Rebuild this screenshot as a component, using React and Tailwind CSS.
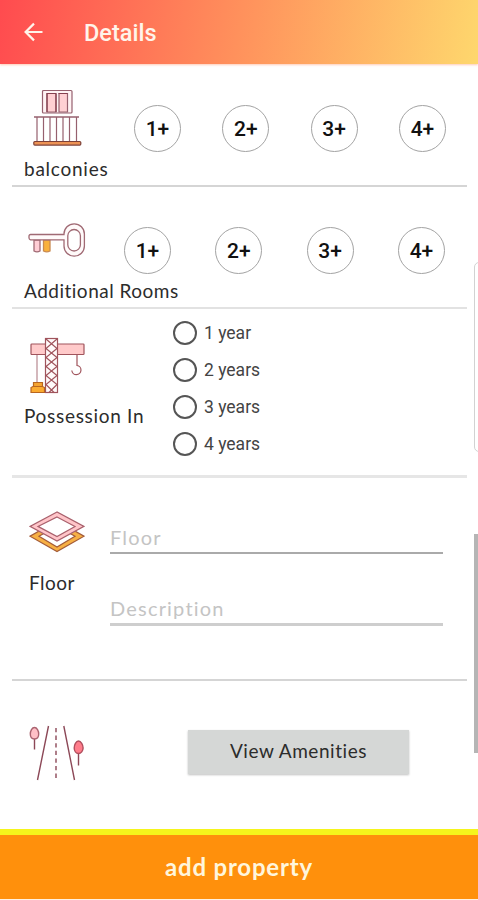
import React, { useState } from 'react';

const COUNTS = ['1+', '2+', '3+', '4+'];
const YEARS = ['1 year', '2 years', '3 years', '4 years'];

function ArrowLeftIcon() {
  return (
    <svg className="ml-[24px] h-[20px] w-[20px]" viewBox="0 0 20 20" fill="none" stroke="#fff4ea" strokeWidth="2.2">
      <path d="M18.5 10H1.8M10 1.600L1.600 10l8.400 8.400" />
    </svg>
  );
}

function BalconyIcon() {
  return (
    <svg className="h-[58px] w-[50px]" viewBox="0 0 50 58" fill="none" stroke="#96606e" strokeWidth="1.2">
      <rect x="9.500" y="1.500" width="29.5" height="22.5" rx="1" fill="#fff3f4" />
      <path d="M14 4.5h9v18.5h-9zM26 4.5h8.5v18.5H26z" fill="#ffd0d3" />
      <path d="M23 4.5v18.5M14 4.5v18.5M13.500 4.5H23M25.500 4.5h9" stroke="#86404f" />
      <path d="M1 28h45" strokeWidth="1.6" />
      <path d="M4 28v24M10.500 28v24M17 28v24M23.500 28v24M30 28v24M36.500 28v24M43.500 28v24" />
      <rect x="0.8" y="52.500" width="47" height="3.6" rx="1" fill="#ed9355" stroke="#7d4138" />
    </svg>
  );
}

function KeyIcon() {
  return (
    <svg className="h-[36px] w-[58px]" viewBox="0 0 58 36" fill="none" stroke="#a06a74" strokeWidth="1.3">
      <path d="M6 17v11q3 1.6 6 0V17z" fill="#ffcdd5" />
      <path d="M15.5 17v11q3.3 1.6 6.5 0V17z" fill="#f9b13c" stroke="#c98a50" />
      <path d="M36 11.5H2.5a1.5 1.5 0 0 0-1.5 1.5v2a2 2 0 0 0 1.5 1.8H36v6.2a10.2 10.2 0 0 0 20.4 0V11a10.2 10.2 0 0 0-20.4 0z" fill="#fffafa" />
      <rect x="39.8" y="6.5" width="12.6" height="21.5" rx="6.3" fill="#fff" />
    </svg>
  );
}

function CraneIcon() {
  return (
    <svg className="h-[58px] w-[56px]" viewBox="0 0 56 58" fill="none" stroke="#a0545c" strokeWidth="1.2">
      <rect x="1" y="7" width="53" height="10.5" rx="0.8" fill="#ffcaca" />
      <path d="M7 18v27" stroke="#b88990" />
      <rect x="15.5" y="1.5" width="12" height="54" fill="#fffafa" />
      <path d="M16 2l11 9.5-11 9 11 9-11 9 11 9-8 8M27 2l-11 9.5 11 9-11 9 11 9-11 9 8 8" />
      <path d="M47 18v10.5a4.6 4.6 0 1 1-5.2 5" />
      <path d="M3.5 50v-4.5h9V50z" fill="#f5a32f" stroke="#b8651f" />
      <path d="M1 55.5v-5l2-1h9.5l2 1v5z" fill="#fbab30" stroke="#b8651f" />
    </svg>
  );
}

function FloorIcon() {
  return (
    <svg className="h-[42px] w-[56px]" viewBox="0 0 56 42" strokeWidth="1.2" fillRule="evenodd">
      <path d="M28 10L1 25.2l27 15.3 27-15.3zM28 15l18 10.2L28 36 10 25.2z" fill="#f7b044" stroke="#a35b38" />
      <path d="M28 1L1 15.4 28 30l27-14.6z" fill="#fff" stroke="none" />
      <path d="M28 1L1 15.4 28 30l27-14.6zM28 6l18 9.4L28 25.5 9 15.4z" fill="#ffc5c9" stroke="#a9606c" />
    </svg>
  );
}

function RoadIcon() {
  return (
    <svg className="h-[56px] w-[56px]" viewBox="0 0 56 56" fill="none" stroke="#8c4857" strokeWidth="1.4">
      <path d="M19.500 1L8.500 55M34.800 1L45.500 55" />
      <path d="M27 3v52" strokeDasharray="4.3 3.3" />
      <path d="M5.500 12v12.5M49.500 27v13.5" />
      <path d="M5.500 2.500C3 2.500 1.300 6 1.300 9s1.800 5 4.200 5 4.200-2 4.200-5S8 2.500 5.500 2.500z" fill="#ffc0c7" stroke="#ab6370" />
      <path d="M49.500 16c-2.500 0-4.300 4-4.300 7s1.800 5.500 4.300 5.500 4.600-2.500 4.600-5.500S52 16 49.500 16z" fill="#ff7d8b" stroke="#b14e5d" />
    </svg>
  );
}

function CountPicker({ className, value, onChange }) {
  return (
    <div className={`flex justify-between ${className}`}>
      {COUNTS.map(c => (
        <button
          key={c}
          onClick={() => onChange(c)}
          aria-pressed={value === c}
          className="flex h-[47px] w-[47px] items-center justify-center rounded-full border border-[#a3a3a3] pt-[2px] font-[Roboto,sans-serif] text-[21px] font-medium text-[#111]"
        >
          {c}
        </button>
      ))}
    </div>
  );
}

function App() {
  const [balconies, setBalconies] = useState(null);
  const [rooms, setRooms] = useState(null);

  return (
    <div className="relative flex h-[900px] w-[478px] flex-col overflow-hidden bg-white font-[Lato,sans-serif] text-[#2c2c2c]">
      <header className="flex h-[64px] shrink-0 items-center bg-linear-[100deg,#ff4b4f_0%,#ff915c_50%,#fed76d_100%] shadow-[0_1px_2px_rgba(255,150,110,0.5)]">
        <ArrowLeftIcon />
        <h1 className="ml-[40px] pt-[4px] font-[Roboto,sans-serif] text-[23.500px] font-medium text-[#fff4ea]">Details</h1>
      </header>

      <section className="flex h-[121px] shrink-0 pl-[24px]">
        <div className="w-[110px] pt-[25px]">
          <div className="pl-[9px]"><BalconyIcon /></div>
          <p className="mt-[10px] text-[19px] leading-[24px] tracking-[0.750px] whitespace-nowrap">balconies</p>
        </div>
        <CountPicker className="mt-[41px] w-[312px]" value={balconies} onChange={setBalconies} />
      </section>
      <div className="mr-[11px] ml-[12px] h-[2px] shrink-0 bg-[#d5d5d5]" />

      <section className="flex h-[120px] shrink-0 pl-[24px]">
        <div className="w-[100px] pt-[36px]">
          <div className="pl-[4px]"><KeyIcon /></div>
          <p className="mt-[20px] text-[19px] leading-[24px] tracking-[0.5px] whitespace-nowrap">Additional Rooms</p>
        </div>
        <CountPicker className="mt-[40px] w-[321px]" value={rooms} onChange={setRooms} />
      </section>
      <div className="mr-[11px] ml-[12px] h-[2px] shrink-0 bg-[#e2e2e2]" />

      <section className="flex h-[166px] shrink-0 pl-[24px]">
        <div className="w-[149px] pt-[28px]">
          <div className="pl-[6px]"><CraneIcon /></div>
          <p className="mt-[9px] text-[19px] leading-[24px] tracking-[0.700px] whitespace-nowrap">Possession In</p>
        </div>
        <div className="flex flex-col gap-[13px] pt-[12px]">
          {YEARS.map(y => (
            <label key={y} className="flex h-[24px] items-center font-[Roboto,sans-serif] text-[17.500px] text-[#444]">
              <input type="radio" name="possession" className="mr-[7px] h-[24px] w-[24px] appearance-none rounded-full border-2 border-[#555] checked:border-[#ff900c]" />
              <span className="pt-[1px]">{y}</span>
            </label>
          ))}
        </div>
      </section>
      <div className="mr-[11px] ml-[12px] h-[3px] shrink-0 bg-[#e6e6e6]" />

      <section className="flex h-[201px] shrink-0 pl-[29px]">
        <div className="w-[81px] pt-[33px]">
          <FloorIcon />
          <p className="mt-[18px] text-[19px] leading-[24px] tracking-[0.5px]">Floor</p>
        </div>
        <div className="w-[333px] pt-[48px]">
          <input
            placeholder="Floor"
            className="block h-[28px] w-full border-b-2 border-[#aaa] pb-[4px] text-[20px] tracking-[1.200px] placeholder-[#c4c4c4] outline-none"
          />
          <input
            placeholder="Description"
            className="mt-[43px] block h-[29px] w-full border-b-[3px] border-[#cecece] pb-[4px] text-[20px] tracking-[1.200px] placeholder-[#c4c4c4] outline-none"
          />
        </div>
      </section>
      <div className="mr-[11px] ml-[12px] h-[2px] shrink-0 bg-[#d5d5d5]" />

      <section className="flex h-[148px] shrink-0 pl-[29px]">
        <div className="w-[159px] pt-[44px]">
          <RoadIcon />
        </div>
        <button className="mt-[49px] h-[44px] w-[221px] bg-[#d5d7d6] pb-[2px] text-[19px] tracking-[0.550px] shadow-[0_1px_2px_rgba(0,0,0,0.25)]">
          View Amenities
        </button>
      </section>

      <button className="h-[70px] shrink-0 border-t-[6px] border-[#f5f51c] bg-[#ff900c] text-[24px] font-bold tracking-[0.800px] text-[#fff6dc]">
        add property
      </button>
      <div className="h-[1px] shrink-0 bg-[#fff1e0]" />

      {/* edge handle and scrollbar float over the form */}
      <div className="absolute top-[262px] right-[-4px] h-[190px] w-[8px] rounded-l-[5px] border border-[#d2d2d2] bg-white" />
      <div className="absolute top-[534px] right-0 h-[219px] w-[4px] bg-[#b5b5b5]" />
    </div>
  );
}

export default App;
